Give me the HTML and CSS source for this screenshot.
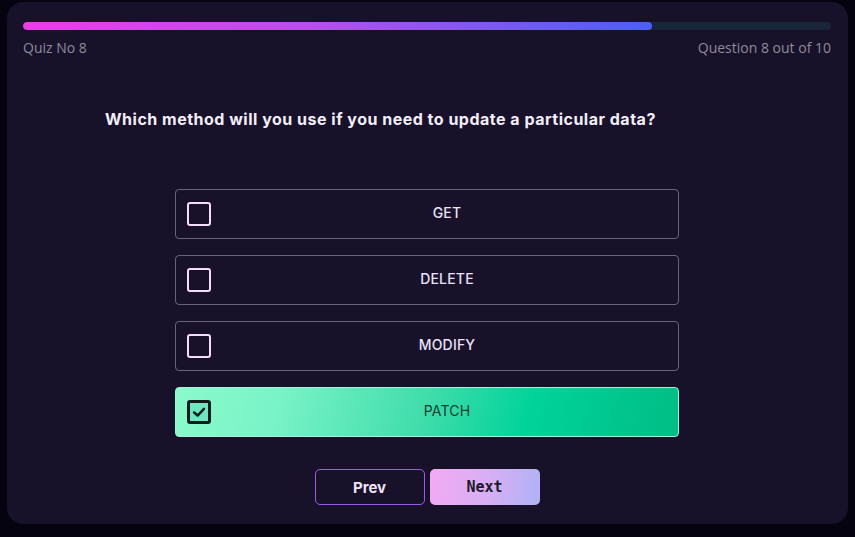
FILE: index.html
```html
<!DOCTYPE html>
<html>
<head>
<meta charset="utf-8">
<link rel="stylesheet" href="styles.css">
</head>
<body>
<div class="card">
  <div class="progress"><div class="fill" style="width:77.9%"></div></div>
  <div class="meta"><span>Quiz No 8</span><span>Question 8 out of 10</span></div>
  <h1 class="question">Which method will you use if you need to update a particular data?</h1>
  <div class="options">
    <div class="option"><span class="box"></span><span class="label">GET</span></div>
    <div class="option"><span class="box"></span><span class="label">DELETE</span></div>
    <div class="option"><span class="box"></span><span class="label">MODIFY</span></div>
    <div class="option selected"><span class="box"><svg viewBox="0 0 18 18" width="18" height="18"><path d="M3.5 9.5 L7.5 13 L14.5 5.5" fill="none" stroke="#10201c" stroke-width="2.8" stroke-linecap="round" stroke-linejoin="round"/></svg></span><span class="label">PATCH</span></div>
  </div>
  <div class="nav">
    <button class="btn prev">Prev</button>
    <button class="btn next">Next</button>
  </div>
</div>
</body>
</html>
```
FILE: styles.css
```css
html, body { margin: 0; padding: 0; }
body {
  background: #04030f;
  width: 855px;
  height: 537px;
  overflow: hidden;
  font-family: "Inter", "Liberation Sans", sans-serif;
}
.card {
  margin: 2px 0 0 7px;
  width: 841px;
  height: 522px;
  box-sizing: border-box;
  background: #17122a;
  border-radius: 16px;
  padding: 20px 17px 0 16px;
}
.progress {
  height: 8px;
  border-radius: 4px;
  background: #19263a;
  overflow: hidden;
}
.fill {
  height: 100%;
  border-radius: 4px;
  background: linear-gradient(90deg, #f23ae6 0%, #b84ef0 45%, #4a60f8 100%);
}
.meta {
  display: flex;
  justify-content: space-between;
  margin-top: 9px;
  font-family: "Open Sans", sans-serif;
  font-size: 14px;
  color: #8f8b9c;
  line-height: 18px;
}
.question {
  margin: 51px 0 0 82px;
  font-size: 16px;
  font-weight: 700;
  color: #f3eef8;
  line-height: 22px;
  letter-spacing: 0.5px;
}
.options {
  width: 504px;
  margin: 59px auto 0;
  display: flex;
  flex-direction: column;
  gap: 16px;
}
.option {
  height: 50px;
  box-sizing: border-box;
  border: 1px solid #6a6380;
  border-radius: 4px;
  display: flex;
  align-items: center;
  padding-left: 11px;
}
.box {
  flex: none;
  width: 24px;
  height: 24px;
  box-sizing: border-box;
  border: 2px solid #f2dcf7;
  border-radius: 3px;
  display: flex;
  align-items: center;
  justify-content: center;
}
.label {
  flex: 1;
  margin-left: 5px;
  padding-bottom: 3px;
  text-align: center;
  font-size: 14px;
  font-weight: 500;
  color: #ece0f4;
  letter-spacing: 0.2px;
}
.option.selected {
  border-color: #a0f5d4;
  background: linear-gradient(105deg, #8afacb 0%, #7af3c8 20%, #3fdcaa 50%, #00d39a 70%, #00bd85 100%);
}
.option.selected .box {
  border: 3px solid #111b1c;
  background: #6ee7c0;
}
.option.selected .box svg { width: 16px; height: 16px; }
.option.selected .label { color: #173a30; font-weight: 400; }
.nav {
  display: flex;
  justify-content: center;
  gap: 5px;
  margin-top: 32px;
}
.btn {
  width: 110px;
  height: 36px;
  border-radius: 5px;
  font-size: 15px;
  font-weight: 700;
  cursor: pointer;
}
.prev {
  background: transparent;
  border: 1px solid #9a5ce6;
  color: #f2e2f6;
  font-family: "Inter", sans-serif;
}
.next {
  border: none;
  background: linear-gradient(100deg, #f3aaf4 0%, #d9aef4 50%, #b0b2f6 100%);
  color: #1d1a2a;
  font-family: "DejaVu Sans Mono", monospace;
}
```
